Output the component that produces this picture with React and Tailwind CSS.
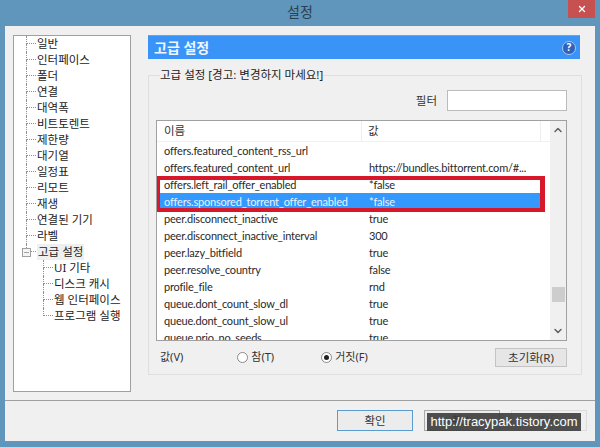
import { Minus, X, ChevronUp, ChevronDown } from 'lucide-react';

const font = "font-['Noto_Sans','Noto_Sans_CJK_KR',sans-serif]";

const treeItems = ['일반', '인터페이스', '폴더', '연결', '대역폭', '비트토렌트', '제한량', '대기열', '일정표', '리모트', '재생', '연결된 기기', '라벨'];
const treeChildren = ['UI 기타', '디스크 캐시', '웹 인터페이스', '프로그램 실행'];

const rows = [
    ['offers.featured_content_rss_url', ''],
    ['offers.featured_content_url', 'https://bundles.bittorrent.com/#...'],
    ['offers.left_rail_offer_enabled', '*false'],
    ['offers.sponsored_torrent_offer_enabled', '*false', true],
    ['peer.disconnect_inactive', 'true'],
    ['peer.disconnect_inactive_interval', '300'],
    ['peer.lazy_bitfield', 'true'],
    ['peer.resolve_country', 'false'],
    ['profile_file', 'rnd'],
    ['queue.dont_count_slow_dl', 'true'],
    ['queue.dont_count_slow_ul', 'true'],
    ['queue.prio_no_seeds', 'true'],
];

function Connector({ last }) {
    return (
        <div className="w-[10px] h-full flex flex-col shrink-0">
            <div className="h-1/2 border-l border-b border-dotted border-[#909090]" />
            <div className={`h-1/2 ${last ? '' : 'border-l border-dotted border-[#909090]'}`} />
        </div>
    );
}

function TreeRow({ label, last }) {
    return (
        <div className="h-4 flex items-center">
            <Connector last={last} />
            <span className="ml-px text-[11.5px] leading-4 text-[#222] whitespace-nowrap">{label}</span>
        </div>
    );
}

function Tree() {
    return (
        <div className="w-[118px] h-[357px] ml-2 mt-[9px] bg-white border border-[#a0a0a0] shrink-0">
            <div className="pl-3">
                {treeItems.map((label) => <TreeRow key={label} label={label} />)}
                <div className="h-4 flex items-center relative">
                    <Connector last />
                    <div className="absolute left-[-4px] top-[4px] w-[9px] h-[9px] bg-[#f4f4f4] border border-[#a0a0a0] flex items-center justify-center">
                        <Minus size={7} strokeWidth={2} className="text-[#666]" />
                    </div>
                    <span className="ml-px px-px bg-[#efefef] text-[11.5px] leading-4 text-[#222] whitespace-nowrap">고급 설정</span>
                </div>
                <div className="pl-[17px]">
                    {treeChildren.map((label, i) => <TreeRow key={label} label={label} last={i === treeChildren.length - 1} />)}
                </div>
            </div>
        </div>
    );
}

function List() {
    return (
        <div className="h-[221px] bg-white border border-[#a0a0a0] flex relative overflow-hidden">
            <div className="flex-1 min-w-0 flex flex-col">
                <div className="h-[21px] flex items-center text-[11.5px] text-[#333] shrink-0 border-b border-[#f0f0f0]">
                    <span className="w-[205px] pl-[7px] border-r border-[#eee] h-full flex items-center">이름</span>
                    <span className="flex-1 pl-[6px] border-r border-[#eee] mr-[9px] h-full flex items-center">값</span>
                </div>
                <div className="overflow-hidden flex-1">
                    {rows.map(([name, value, selected]) => (
                        <div key={name} className={`h-[17px] flex items-center font-['Lato','Noto_Sans',sans-serif] text-[11px] tracking-[-0.2px] leading-[17px] whitespace-nowrap ${selected ? 'bg-[#3399ff] text-[#e8f3ff] mr-[10px]' : 'text-[#2a2a2a]'}`}>
                            <span className="w-[212px] shrink-0 pl-[7px]">{name}</span>
                            <span>{value}</span>
                        </div>
                    ))}
                </div>
            </div>
            <div className="w-4 bg-[#f0f0f0] flex flex-col items-center shrink-0">
                <ChevronUp size={12} strokeWidth={3} className="text-[#606060] mt-[3px]" />
                <div className="flex-1" />
                <div className="w-[13px] h-[15px] bg-[#cdcdcd]" />
                <div className="h-[23px]" />
                <ChevronDown size={12} strokeWidth={3} className="text-[#606060] mb-[3px]" />
            </div>
            <div className="absolute left-[-2px] top-[55px] w-[390px] h-9 border-y-4 border-x-[5px] border-[#d7182a]" />
        </div>
    );
}

function Radio({ label, checked, className }) {
    return (
        <div className={`flex items-center gap-[3px] ${className}`}>
            <div className="w-[11px] h-[11px] rounded-full bg-white border border-[#8a8a8a] flex items-center justify-center">
                {checked && <div className="w-[5px] h-[5px] rounded-full bg-[#222]" />}
            </div>
            <span className="text-[11px] text-[#333]">{label}</span>
        </div>
    );
}

function Settings() {
    return (
        <div className="flex-1 min-w-0 ml-[17px] mt-[9px] mr-[13px]">
            <div className="w-[432px] h-6 bg-[#3a94f8] border-t border-[#999] flex items-center justify-between pl-[6px] pr-1">
                <span className="text-[14px] font-semibold text-[#eef6ff]">고급 설정</span>
                <div className="w-[14px] h-[14px] rounded-full bg-[#2f62bd] border border-[#a9c6ee] text-white text-[10px] font-bold flex items-center justify-center">?</div>
            </div>
            <fieldset className="mt-[8px] h-[308px] min-w-0 border border-[#dfdfdf] px-[7px]">
                <legend className="ml-1 text-[11.5px] leading-4 text-[#222]">고급 설정 [경고: 변경하지 마세요!]</legend>
                <div className="h-[21px] mt-[7px] flex items-center justify-end gap-[10px] pr-[7px]">
                    <span className="text-[11.5px] text-[#333]">필터</span>
                    <div className="w-[120px] h-[21px] bg-white border border-[#bbb]" />
                </div>
                <div className="mt-[9px] mr-[7px]">
                    <List />
                </div>
                <div className="h-[19px] mt-[7px] flex items-center pr-[7px]">
                    <span className="text-[11px] text-[#333] ml-1">값(V)</span>
                    <Radio label="참(T)" className="ml-[54px]" />
                    <Radio label="거짓(F)" checked className="ml-[47px]" />
                    <button className="ml-auto w-[72px] h-[19px] bg-[#e6e6e6] border border-[#c4c4c4] text-[11.5px] text-[#333]">초기화(R)</button>
                </div>
            </fieldset>
        </div>
    );
}

export default function App() {
    return (
        <div className={`w-[600px] h-[447px] bg-[#6096bb] flex flex-col relative overflow-hidden ${font}`}>
            {/* Title bar */}
            <div className="h-[26px] flex items-start shrink-0">
                <span className="flex-1 pl-8 text-center text-[14px] leading-[24px] text-[#2c3e4e]">설정</span>
                <div className="w-[27px] h-[18px] mr-[5px] bg-[#c75050] flex items-center justify-center">
                    <X size={10} strokeWidth={3} className="text-white" />
                </div>
            </div>

            {/* Client area */}
            <div className="w-[590px] h-[415px] ml-[5px] bg-[#f0f0f0] flex flex-col">
                <div className="flex h-[374px]">
                    <Tree />
                    <Settings />
                </div>
                <div className="h-[41px] border-t border-[#a0a0a0] flex items-start justify-end pt-[9px] pr-2 gap-[11px]">
                    <button className="w-[76px] h-[21px] bg-[#ececec] border border-[#5a9bd0] text-[11.5px] text-[#333]">확인</button>
                    <button className="w-[76px] h-[21px] bg-[#ececec] border border-[#a8a8a8] text-[11.5px] text-[#333]">취소</button>
                    <button className="w-[76px] h-[21px] bg-[#efefef] border border-[#dcdcdc] text-[11.5px] text-[#aaa]">적용</button>
                </div>
            </div>

            {/* Blog watermark */}
            <div className="absolute left-[427px] top-[413px] w-[154px] h-[18px] bg-[#3c3c3c]/90 flex items-center justify-center text-[13px] text-white font-['Liberation_Sans',sans-serif] whitespace-nowrap">
                http://tracypak.tistory.com
            </div>
        </div>
    );
}
